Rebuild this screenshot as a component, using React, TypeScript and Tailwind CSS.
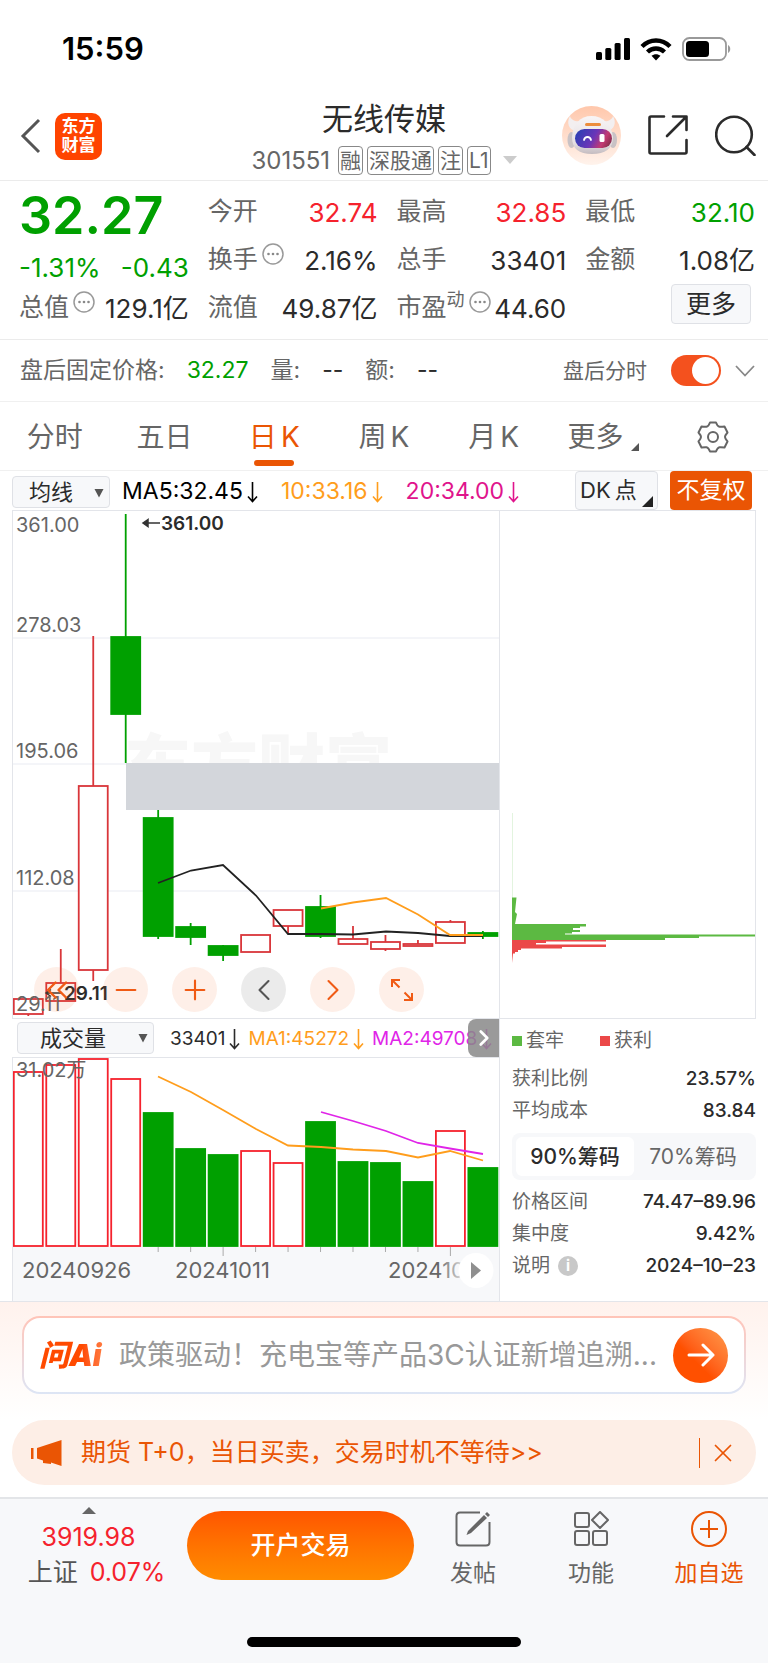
import React, { useState } from "react";
import { ChevronLeft, ChevronRight, ChevronsLeft, Minus, Plus, X } from "lucide-react";

const UP = "#d9363a";
const DOWN = "#00a000";

// open bodies are drawn as outlines, falling ones are filled
const candles = [
  { up: true, top: 999, bottom: 1014, high: 999, low: 1016 },
  { up: true, top: 983, bottom: 1001, high: 949, low: 1001 },
  { up: true, top: 786, bottom: 970, high: 636, low: 981 },
  { up: false, top: 637, bottom: 714, high: 514, low: 763 },
  { up: false, top: 818, bottom: 936, high: 810, low: 939 },
  { up: false, top: 927, bottom: 937, high: 923, low: 945 },
  { up: false, top: 946, bottom: 955, high: 945, low: 961 },
  { up: true, top: 935, bottom: 952, high: 935, low: 952 },
  { up: true, top: 910, bottom: 926, high: 910, low: 933 },
  { up: false, top: 907, bottom: 936, high: 895, low: 938 },
  { up: true, top: 939, bottom: 944, high: 926, low: 944 },
  { up: true, top: 942, bottom: 949, high: 935, low: 951 },
  { up: true, top: 944, bottom: 946, high: 940, low: 946 },
  { up: true, top: 922, bottom: 943, high: 920, low: 943 },
  { up: false, top: 933, bottom: 936, high: 931, low: 939 },
];

const volumes = [
  { up: true, top: 1072 },
  { up: true, top: 1065 },
  { up: true, top: 1059 },
  { up: true, top: 1079 },
  { up: false, top: 1113 },
  { up: false, top: 1149 },
  { up: false, top: 1155 },
  { up: true, top: 1151 },
  { up: true, top: 1163 },
  { up: false, top: 1122 },
  { up: false, top: 1162 },
  { up: false, top: 1163 },
  { up: false, top: 1182 },
  { up: true, top: 1131 },
  { up: false, top: 1168 },
];

const centerX = (i: number) => 28.3 + i * 32.47;

const quotes = [
  { label: "今开", value: "32.74", color: "text-[#f5222d]" },
  { label: "最高", value: "32.85", color: "text-[#f5222d]" },
  { label: "最低", value: "32.10", color: "text-[#00a000]" },
  { label: "换手", value: "2.16%", color: "text-[#2b2b2b]", more: true },
  { label: "总手", value: "33401", color: "text-[#2b2b2b]" },
  { label: "金额", value: "1.08亿", color: "text-[#2b2b2b]" },
  { label: "总值", value: "129.1亿", color: "text-[#2b2b2b]", more: true },
  { label: "流值", value: "49.87亿", color: "text-[#2b2b2b]" },
  { label: "市盈", sup: "动", value: "44.60", color: "text-[#2b2b2b]", more: true },
];

const tabs = ["分时", "五日", "日K", "周K", "月K"];

const MoreDots = () => (
  <svg className="mb-3 ml-1 h-[22px] w-[22px] shrink-0" viewBox="0 0 22 22" fill="none">
    <circle cx="11" cy="11" r="10" stroke="#999" strokeWidth="1.5" />
    <circle cx="6.5" cy="11" r="1.3" fill="#888" />
    <circle cx="11" cy="11" r="1.3" fill="#888" />
    <circle cx="15.5" cy="11" r="1.3" fill="#888" />
  </svg>
);

const DownArrow = () => (
  <svg className="ml-1 h-6 w-[11px] shrink-0" viewBox="0 0 11 24" fill="none" stroke="currentColor" strokeWidth="1.6">
    <path d="M5.5 2V21M1 16.5L5.5 21.5L10 16.5" />
  </svg>
);

const Caret = () => (
  <svg className="pointer-events-none absolute right-1.5 top-1/2 h-2.5 w-2.5 -translate-y-1/2" viewBox="0 0 10 10">
    <path d="M0.5 1H9.5L5 9.5Z" fill="#555" />
  </svg>
);

const Robot = () => (
  <svg className="h-[59px] w-[59px]" viewBox="0 0 59 59">
    <defs>
      <linearGradient id="robotBg" x1="0" y1="0" x2="0" y2="1">
        <stop offset="0" stopColor="#ffc7ab" />
        <stop offset="1" stopColor="#fff3ec" />
      </linearGradient>
      <linearGradient id="robotBody" x1="0" y1="0" x2="0" y2="1">
        <stop offset="0" stopColor="#f8f5f6" />
        <stop offset="0.7" stopColor="#e6e0e3" />
        <stop offset="1" stopColor="#c4bcc0" />
      </linearGradient>
      <linearGradient id="robotFace" x1="0" y1="0.3" x2="1" y2="0.6">
        <stop offset="0" stopColor="#2c3fb4" />
        <stop offset="0.5" stopColor="#6a35b8" />
        <stop offset="0.8" stopColor="#c43a72" />
        <stop offset="1" stopColor="#8a2f50" />
      </linearGradient>
    </defs>
    <circle cx="29.5" cy="29.5" r="29.5" fill="url(#robotBg)" />
    <path d="M8 10C4 17 7 24 14 25L20 15C13 16 9 14 8 10Z" fill="#f3eff0" />
    <path d="M51 10C55 17 52 24 45 25L39 15C46 16 50 14 51 10Z" fill="#f3eff0" />
    <ellipse cx="9.5" cy="34" rx="4" ry="8" fill="#c9c2c5" />
    <ellipse cx="51" cy="34" rx="4" ry="8" fill="#c9c2c5" />
    <path d="M29.5 10C18 10 11 18 10 31C10 43 17 48 30 48C43 48 51 43 51 31C49 18 41 10 29.5 10Z" fill="url(#robotBody)" />
    <rect x="23" y="17" width="16" height="3" rx="1.5" fill="#ec8d3c" />
    <rect x="13" y="23" width="37" height="19" rx="9.5" fill="url(#robotFace)" />
    <path d="M22 34C23 30 28 30 29 34" stroke="#fff" strokeWidth="1.8" fill="none" strokeLinecap="round" />
    <rect x="37.5" y="28" width="5" height="8" rx="1.5" fill="#fff" />
  </svg>
);

const KChart = () => (
  <svg className="block h-auto w-full" viewBox="13 511 486 507">
    {[638, 764, 891].map((y) => (
      <path key={y} d={`M12 ${y}H500`} stroke="#e9ebf2" />
    ))}
    <text x="124" y="790" fontSize="67" fontWeight="900" fill="#f7f7f7">
      东方财富
    </text>
    <rect x="126" y="763" width="374" height="47" fill="#d3d6db" />
    <g fontSize="20" fill="#666">
      <text x="16" y="532">361.00</text>
      <text x="16" y="632">278.03</text>
      <text x="16" y="758">195.06</text>
      <text x="16" y="885">112.08</text>
    </g>
    {candles.map((c, i) => {
      const color = c.up ? UP : DOWN;
      return (
        <g key={i} stroke={color}>
          <path d={`M${centerX(i)} ${c.high}V${c.top}M${centerX(i)} ${c.bottom}V${c.low}`} strokeWidth="1.8" />
          <rect
            x={centerX(i) - 14.5}
            y={c.top}
            width="29"
            height={c.bottom - c.top}
            fill={c.up ? "#fff" : color}
            fillOpacity={i < 2 ? 0 : 1}
            strokeWidth="1.8"
          />
        </g>
      );
    })}
    <polyline
      points="158,883 191,870.5 223,865 256,895.5 288,934 321,934 353,934.5 386,931.5 418,933 450,936 483,936"
      fill="none"
      stroke="#222"
      strokeWidth="1.8"
    />
    <polyline points="321,908.5 353,902.5 386,898 418,914.5 450,935 483,935" fill="none" stroke="#ff9d1c" strokeWidth="1.8" />
    <path d="M143 523H160M148 519.5L143 523L148 526.5Z" stroke="#333" fill="#333" strokeWidth="1.5" />
    <g fontSize="19" fontWeight="600" fill="#2b2b2b">
      <text x="161" y="530">361.00</text>
      <text x="64" y="1000">29.11</text>
    </g>
    <path d="M46 993H62M51 989.5L46 993L51 996.5" stroke="#333" strokeWidth="1.5" fill="none" />
    <text x="16" y="1011" fontSize="20" fill="#666">
      29.11
    </text>
  </svg>
);

const VolumeChart = () => (
  <svg className="block h-auto w-full" viewBox="13 1058 486 243">
    <rect x="12" y="1247" width="488" height="54" fill="#f7f8fa" />
    {volumes.map((v, i) => (
      <rect
        key={i}
        x={centerX(i) - 14.5}
        y={v.top}
        width="29"
        height={1246 - v.top}
        fill={v.up ? "#fff" : DOWN}
        stroke={v.up ? "#f5222d" : DOWN}
        strokeWidth="1.8"
      />
    ))}
    {[4, 5, 6, 7, 8, 9, 10, 11, 12, 13].map((i) => (
      <path key={i} d={`M${centerX(i)} 1247V${i === 6 || i === 13 ? 1256 : 1252}`} stroke="#aaa" />
    ))}
    <polyline
      points="158,1076.5 191,1092 223,1110 256,1129 288,1145.5 321,1147 353,1149.5 386,1151 418,1157.5 450,1151 483,1160.5"
      fill="none"
      stroke="#ff9d1c"
      strokeWidth="1.8"
    />
    <polyline points="321,1112 353,1121 386,1131 418,1143 450,1148.5 483,1154" fill="none" stroke="#e025e8" strokeWidth="1.8" />
    <text x="16" y="1077" fontSize="20" fill="#666">
      31.02万
    </text>
    <g fontSize="22" fill="#666">
      <text x="22" y="1278">20240926</text>
      <text x="175" y="1278">20241011</text>
      <text x="388" y="1278">20241023</text>
    </g>
    <defs>
      <linearGradient id="dateFade">
        <stop offset="0" stopColor="#f7f8fa" stopOpacity="0" />
        <stop offset="0.5" stopColor="#f7f8fa" />
      </linearGradient>
    </defs>
    <rect x="438" y="1257" width="62" height="42" fill="url(#dateFade)" />
    <circle cx="476" cy="1270.5" r="17.5" fill="#fff" />
    <path d="M471 1262L481 1270.5L471 1279Z" fill="#8f8f8f" />
  </svg>
);

const ChipChart = () => (
  <svg className="block h-auto w-full" viewBox="500 511 255 507">
    <path d="M512.5 813V898" stroke="#e3f4df" />
    <path
      d="M512 897.5H516.5L515 912L517 914L515 924H586V926.5H580V928H573V930H580V932H572V933.5H565V934.5H755V936.5H699V938H665V940H512Z"
      fill="#5cb942"
    />
    <path
      d="M512 940H606V941.5H546V943H536V944.5H606V947H562V948.5H521V950H518V952H515V953.5H513L512 963Z"
      fill="#eb4848"
    />
  </svg>
);

const ToolButton = ({ label, gray, children }: { label: string; gray?: boolean; children: React.ReactNode }) => (
  <button
    aria-label={label}
    className={
      gray
        ? "flex h-[45px] w-[45px] items-center justify-center rounded-full bg-black/8 text-[#555]"
        : "flex h-[45px] w-[45px] items-center justify-center rounded-full bg-[#f26322]/10 text-[#f05a14]"
    }
  >
    {children}
  </button>
);

const InfoRow = ({ label, value, info }: { label: string; value: string; info?: boolean }) => (
  <div className="flex h-8 items-center justify-between text-[19px]">
    <span className="flex items-center gap-2 text-[#666]">
      {label}
      {info && (
        <span className="flex h-5 w-5 items-center justify-center rounded-full bg-[#c8c8c8] text-[15px] font-bold text-white">i</span>
      )}
    </span>
    <span className="font-medium text-[#2b2b2b]">{value}</span>
  </div>
);

const App = () => {
  const [tab, setTab] = useState("日K");
  const [range, setRange] = useState("90%筹码");
  const [afterHours, setAfterHours] = useState(true);
  const [showBanner, setShowBanner] = useState(true);

  return (
    <div className="w-full bg-white font-['Inter','Noto_Sans_CJK_SC',sans-serif] text-[#2b2b2b]">
      {/* status bar */}
      <div className="flex h-[98px] items-center justify-between pl-[62px] pr-9">
        <span className="text-[31px] font-semibold text-black">15:59</span>
        <div className="flex items-center gap-2.5">
          <svg className="h-[22px] w-[34px]" viewBox="0 0 34 22">
            <rect x="0" y="14" width="6" height="8" rx="1.5" />
            <rect x="9.3" y="10" width="6" height="12" rx="1.5" />
            <rect x="18.6" y="5" width="6" height="17" rx="1.5" />
            <rect x="28" y="0" width="6" height="22" rx="1.5" />
          </svg>
          <svg className="h-[23px] w-8" viewBox="0 0 32 23" fill="none" stroke="#000" strokeWidth="4.4">
            <path d="M2 8.5C10 0.5 22 0.5 30 8.5" />
            <path d="M7.5 14C12.5 9.3 19.5 9.3 24.5 14" />
            <path d="M16 22.5L11.5 17.8C14 15.6 18 15.6 20.5 17.8Z" fill="#000" stroke="none" />
          </svg>
          <svg className="h-6 w-[50px]" viewBox="0 0 50 24">
            <rect x="1" y="1" width="43" height="22" rx="6.5" fill="none" stroke="#999" strokeWidth="1.8" />
            <rect x="4" y="4" width="23" height="16" rx="3.5" />
            <path d="M46 8C49 9.5 49 14.5 46 16Z" fill="#999" />
          </svg>
        </div>
      </div>

      {/* header */}
      <header className="grid h-[83px] grid-cols-[1fr_auto_1fr] border-b border-[#ebebeb]">
        <div className="flex items-center gap-[14px] pb-1.5 pl-5">
          <button aria-label="返回">
            <svg className="h-9 w-[21px]" viewBox="0 0 21 36" fill="none" stroke="#555" strokeWidth="3">
              <path d="M19 2L3 18L19 34" />
            </svg>
          </button>
          <span className="flex h-[47px] w-[47px] flex-col items-center justify-center rounded-[10px] bg-[#ff4400] text-[17px] leading-[19px] font-bold text-white">
            <span>东方</span>
            <span>财富</span>
          </span>
        </div>
        <div className="flex flex-col items-center">
          <h1 className="h-[42px] text-[31px] leading-[42px]">无线传媒</h1>
          <div className="flex h-10 items-center gap-1 text-[24px] leading-[27px] text-[#666]">
            <span className="mr-1">301551</span>
            {["融", "深股通", "注", "L1"].map((t) => (
              <span key={t} className="rounded-[4px] border border-[#888] px-px text-[21px]">
                {t}
              </span>
            ))}
            <svg className="ml-2 h-2 w-[14px]" viewBox="0 0 14 8">
              <path d="M0 0H14L7 8Z" fill="#ccc" />
            </svg>
          </div>
        </div>
        <div className="flex items-center justify-end gap-[27px] pb-2 pr-3">
          <Robot />
          <button aria-label="分享">
            <svg className="h-10 w-10" viewBox="0 0 40 40" fill="none" stroke="#2b2b2b" strokeWidth="2.6" strokeLinecap="round">
              <path d="M16 1.5H3Q1.5 1.5 1.5 3V37Q1.5 38.5 3 38.5H37Q38.5 38.5 38.5 37V25" />
              <path d="M25 1.5H38.5V15M38 2L19 21" strokeLinejoin="round" />
            </svg>
          </button>
          <button aria-label="搜索">
            <svg className="h-[41px] w-[41px]" viewBox="0 0 41 41" fill="none" stroke="#2b2b2b" strokeWidth="2.6" strokeLinecap="round">
              <circle cx="19" cy="19.5" r="17.8" />
              <path d="M31.5 32L39.5 40" />
            </svg>
          </button>
        </div>
      </header>

      {/* quote */}
      <section className="grid grid-cols-4 grid-rows-[48px_48px_48px] gap-x-[19px] border-b border-[#ebebeb] pt-[7px] pr-[13px] pb-[7px] pl-[19px] text-[25px]">
        <div className="row-span-2 flex flex-col text-[#00a000]">
          <span className="h-[55px] shrink-0 text-[52px] leading-[55px] font-semibold">32.27</span>
          <span className="flex h-12 shrink-0 items-center justify-between text-[26px]">
            <span>-1.31%</span>
            <span>-0.43</span>
          </span>
        </div>
        {quotes.map((q) => (
          <div key={q.label} className="flex items-center justify-between whitespace-nowrap">
            <span className="flex items-center text-[#666]">
              {q.label}
              {q.sup && <span className="mb-4 text-[18px] leading-5">{q.sup}</span>}
              {q.more && <MoreDots />}
            </span>
            <span className={`text-[26px] ${q.color}`}>{q.value}</span>
          </div>
        ))}
        <div className="flex items-start justify-end pr-1">
          <button className="h-10 w-20 rounded-[4px] border border-[#dfe1e6] bg-[#f7f8fa] leading-[36px]">更多</button>
        </div>
      </section>

      {/* after hours */}
      <section className="flex h-[62px] items-center border-b border-[#f0f0f0] pr-[13px] pl-5 text-[23px] text-[#666]">
        <span>盘后固定价格:</span>
        <span className="ml-[22px] text-[#00a000]">32.27</span>
        <span className="ml-[22px]">量:</span>
        <span className="ml-[22px] text-[#2b2b2b]">--</span>
        <span className="ml-[22px]">额:</span>
        <span className="ml-[22px] text-[#2b2b2b]">--</span>
        <label className="ml-auto flex items-center gap-6 text-[21px]">
          盘后分时
          <input
            type="checkbox"
            className="peer sr-only"
            checked={afterHours}
            onChange={(e) => setAfterHours(e.target.checked)}
          />
          <span className="flex h-[31px] w-[50px] items-center rounded-full bg-[#ccc] p-0.5 peer-checked:justify-end peer-checked:bg-[#f4511e]">
            <span className="h-[27px] w-[27px] rounded-full bg-white" />
          </span>
        </label>
        <svg className="ml-[14px] h-3 w-5" viewBox="0 0 20 12" fill="none" stroke="#888" strokeWidth="1.8">
          <path d="M1 1L10 10.5L19 1" />
        </svg>
      </section>

      {/* period tabs */}
      <nav className="grid h-[69px] grid-cols-7 border-b border-[#f0f0f0] pt-0.5 text-[28px]">
        {tabs.map((t) => (
          <button
            key={t}
            onClick={() => setTab(t)}
            className={
              tab === t
                ? "relative flex items-center justify-center gap-1 text-[#ea5504]"
                : "relative flex items-center justify-center gap-1 text-[#666]"
            }
          >
            {t.endsWith("K") ? (
              <>
                <span>{t[0]}</span>
                <span>K</span>
              </>
            ) : (
              t
            )}
            {tab === t && <span className="absolute bottom-1 left-1/2 h-1.5 w-10 -translate-x-1/2 rounded-[3px] bg-[#ea5504]" />}
          </button>
        ))}
        <button className="flex items-center justify-center gap-2 text-[#666]">
          更多
          <svg className="mt-5 h-2 w-2" viewBox="0 0 8 8">
            <path d="M8 0V8H0Z" fill="#555" />
          </svg>
        </button>
        <button aria-label="设置" className="flex items-center justify-center">
          <svg className="h-8 w-8" viewBox="0 0 32 32" fill="none" stroke="#666" strokeWidth="2" strokeLinejoin="round">
            <path d="M13 1.5H19Q20.5 5.5 22.5 5.8Q24 6 27.5 5.5L30.5 11.5Q28 14.5 28 16Q28 17.5 30.5 20.5L27.5 26.5Q24 26 22.5 26.2Q20.5 26.5 19 30.5H13Q11.5 26.5 9.5 26.2Q8 26 4.5 26.5L1.5 20.5Q4 17.5 4 16Q4 14.5 1.5 11.5L4.5 5.5Q8 6 9.5 5.8Q11.5 5.5 13 1.5Z" />
            <circle cx="16" cy="16" r="5" />
          </svg>
        </button>
      </nav>

      {/* moving averages */}
      <div className="flex h-[39px] items-center pr-4 pl-3 text-[23px] whitespace-nowrap">
        <div className="relative mt-1 text-[22px]">
          <select aria-label="指标" className="h-8 w-[98px] appearance-none rounded-[4px] border border-[#dfe1e6] bg-[#f7f8fa] pl-4 leading-[30px]">
            <option>均线</option>
          </select>
          <Caret />
        </div>
        <div className="mt-0.5 ml-3 flex gap-[23px]">
          <span className="flex items-center text-black">
            MA5:32.45
            <DownArrow />
          </span>
          <span className="flex items-center text-[#ff9d1c]">
            10:33.16
            <DownArrow />
          </span>
          <span className="flex items-center text-[#e0148c]">
            20:34.00
            <DownArrow />
          </span>
        </div>
        <button className="relative ml-auto flex h-[39px] w-[83px] items-center gap-1 rounded-[4px] border border-[#dfe1e6] bg-[#f7f8fa] pl-1 text-[22px]">
          <span>DK</span>
          <span>点</span>
          <svg className="absolute right-1 bottom-0.5 h-[11px] w-[11px]" viewBox="0 0 11 11">
            <path d="M11 0V11H0Z" fill="#222" />
          </svg>
        </button>
        <button className="ml-3 h-[39px] w-[82px] rounded-[4px] bg-[#ea5504] text-white">不复权</button>
      </div>

      {/* charts */}
      <main className="grid grid-cols-[488fr_256fr] px-3">
        <div className="min-w-0 border-r border-[#e3e5ea]">
          <div className="relative border-t border-b border-l border-[#e3e5ea]">
            <KChart />
            <div className="absolute bottom-1.5 left-[21px] flex gap-6">
              <ToolButton label="最早">
                <ChevronsLeft size={36} strokeWidth={1.6} />
              </ToolButton>
              <ToolButton label="缩小">
                <Minus size={32} strokeWidth={1.6} />
              </ToolButton>
              <ToolButton label="放大">
                <Plus size={32} strokeWidth={1.6} />
              </ToolButton>
              <ToolButton label="左移" gray>
                <ChevronLeft size={36} strokeWidth={1.4} />
              </ToolButton>
              <ToolButton label="右移">
                <ChevronRight size={36} strokeWidth={1.4} />
              </ToolButton>
              <ToolButton label="全屏">
                <svg className="h-6 w-6" viewBox="0 0 24 24" fill="none" stroke="currentColor" strokeWidth="2">
                  <path d="M2 9V2H10M2 2L9.5 9.5M22 15V22H14M22 22L14.5 14.5" />
                </svg>
              </ToolButton>
            </div>
          </div>
          <div className="relative flex h-[38px] items-center overflow-hidden text-[19px] whitespace-nowrap">
            <div className="relative ml-[5px] text-[22px]">
              <select aria-label="副图" className="h-8 w-[137px] appearance-none rounded-[4px] border border-[#dfe1e6] bg-[#f7f8fa] pl-[22px] leading-[30px]">
                <option>成交量</option>
              </select>
              <Caret />
            </div>
            <div className="mt-0.5 ml-4 flex gap-2">
              <span className="flex items-center">
                33401
                <DownArrow />
              </span>
              <span className="flex items-center text-[#ff9d1c]">
                MA1:45272
                <DownArrow />
              </span>
              <span className="flex items-center text-[#e025e8]">
                MA2:49708
                <DownArrow />
              </span>
            </div>
            <button aria-label="展开" className="absolute inset-y-0 right-0 flex w-[31px] items-center justify-center rounded-l-lg bg-[#888]/85 text-white">
              <ChevronRight size={26} strokeWidth={2.5} />
            </button>
          </div>
          <div className="border-t border-l border-[#e3e5ea]">
            <VolumeChart />
          </div>
        </div>

        <div className="min-w-0">
          <div className="border-t border-r border-b border-[#e3e5ea]">
            <ChipChart />
          </div>
          <div className="pl-3">
            <div className="flex h-11 items-center text-[19px] text-[#666]">
              <span className="flex w-[88px] items-center gap-1">
                <span className="h-2.5 w-2.5 bg-[#5cb942]" />
                套牢
              </span>
              <span className="flex items-center gap-1">
                <span className="h-2.5 w-2.5 bg-[#eb4848]" />
                获利
              </span>
            </div>
            <InfoRow label="获利比例" value="23.57%" />
            <InfoRow label="平均成本" value="83.84" />
            <div className="my-1.5 flex h-[47px] rounded-lg bg-[#f7f8fa] p-1 text-[21px]">
              {["90%筹码", "70%筹码"].map((r) => (
                <button
                  key={r}
                  onClick={() => setRange(r)}
                  className={range === r ? "flex-1 rounded-md bg-white font-medium" : "flex-1 text-[#666]"}
                >
                  {r}
                </button>
              ))}
            </div>
            <InfoRow label="价格区间" value="74.47–89.96" />
            <InfoRow label="集中度" value="9.42%" />
            <InfoRow label="说明" value="2024–10–23" info />
          </div>
        </div>
      </main>

      {/* ask ai */}
      <section className="border-t border-[#e3e5ea] bg-linear-to-b from-[#fff2ed] to-white px-[22px] pt-[14px] pb-[26px]">
        <div className="rounded-[18px] bg-linear-to-b from-[#ffc4b8] to-[#dde5f5] p-0.5">
          <div className="flex h-[74px] items-center rounded-2xl bg-white pr-4 pl-[15px]">
            <label
              htmlFor="ask"
              className="w-[72px] shrink-0 bg-linear-to-r from-[#ff4a00] from-60% to-[#ff8a4d] bg-clip-text text-[30px] font-black text-transparent italic"
            >
              问Ai
            </label>
            <input
              id="ask"
              className="ml-2 min-w-0 flex-1 text-[28px] outline-none placeholder:text-[#999]"
              placeholder="政策驱动！充电宝等产品3C认证新增追溯..."
            />
            <button aria-label="发送" className="ml-4 flex h-[55px] w-[55px] shrink-0 items-center justify-center rounded-full bg-linear-to-tr from-[#ff5000] from-40% to-[#ff9a4a]">
              <svg className="h-7 w-7" viewBox="0 0 28 28" fill="none" stroke="#fff" strokeWidth="3" strokeLinecap="round" strokeLinejoin="round">
                <path d="M2 14H26M16 4L26 14L16 24" />
              </svg>
            </button>
          </div>
        </div>
      </section>

      {showBanner && (
        <div className="mx-3 mb-3 flex h-[65px] items-center rounded-full bg-[#fdeee6] pr-[18px] pl-[19px] text-[#ea5504]">
          <svg className="h-[26px] w-[31px] shrink-0" viewBox="0 0 31 26" fill="#ea5504">
            <rect x="0" y="8" width="2.5" height="11" />
            <path d="M6 8L30.5 0V26L20 22.5V24L12 23V20.5L6 18.5Z" />
          </svg>
          <a href="#" className="ml-[19px] flex-1 text-[25px]">
            期货 T+0，当日买卖，交易时机不等待&gt;&gt;
          </a>
          <span className="h-[30px] w-px bg-[#ea5504]" />
          <button aria-label="关闭" className="ml-2" onClick={() => setShowBanner(false)}>
            <X size={30} strokeWidth={1.4} />
          </button>
        </div>
      )}

      {/* bottom bar */}
      <footer className="border-t-2 border-[#e3e5e8] bg-[#f7f8fa]">
        <div className="grid h-[132px] grid-cols-[187fr_227fr_118fr_118fr_118fr] text-[23px]">
          <div className="flex flex-col items-center pt-2 pr-2.5 text-[25px] leading-[35px] text-[#f5222d]">
            <svg className="h-[7px] w-[14px]" viewBox="0 0 14 7">
              <path d="M7 0L14 7H0Z" fill="#666" />
            </svg>
            <span className="mt-1.5">3919.98</span>
            <span className="flex gap-3 pl-4">
              <span className="text-[#555]">上证</span>
              <span>0.07%</span>
            </span>
          </div>
          <button className="mt-3 h-[69px] rounded-full bg-linear-to-b from-[#ff5500] to-[#ff8c00] text-[25px] font-medium text-white">
            开户交易
          </button>
          <button className="mt-3 flex h-[77px] flex-col items-center justify-between text-[#666]">
            <svg className="h-9 w-9" viewBox="0 0 36 36" fill="none" stroke="currentColor" strokeWidth="2">
              <path d="M25 1.5H5Q1.5 1.5 1.5 5V31Q1.5 34.5 5 34.5H31Q34.5 34.5 34.5 31V11" />
              <path d="M13 20L29 4L32 7L16 22L11.5 24Z" fill="currentColor" stroke="none" />
              <path d="M30 3L32 1L35 4L33 6Z" fill="currentColor" stroke="none" />
            </svg>
            <span className="leading-[30px]">发帖</span>
          </button>
          <button className="mt-3 flex h-[77px] flex-col items-center justify-between text-[#666]">
            <svg className="h-9 w-9" viewBox="0 0 36 36" fill="none" stroke="currentColor" strokeWidth="2" strokeLinejoin="round">
              <rect x="2" y="2" width="14" height="14" rx="2" />
              <rect x="2" y="20" width="14" height="14" rx="2" />
              <rect x="20" y="20" width="14" height="14" rx="2" />
              <path d="M27 1L35 9L27 17L19 9Z" />
            </svg>
            <span className="leading-[30px]">功能</span>
          </button>
          <button className="mt-3 flex h-[77px] flex-col items-center justify-between text-[#ea5504]">
            <svg className="h-9 w-9" viewBox="0 0 36 36" fill="none" stroke="currentColor" strokeWidth="2">
              <circle cx="18" cy="18" r="17" />
              <path d="M18 9V27M9 18H27" />
            </svg>
            <span className="leading-[30px]">加自选</span>
          </button>
        </div>
        <div className="flex justify-center pt-1.5 pb-4">
          <span className="h-2.5 w-[274px] rounded-full bg-black" />
        </div>
      </footer>
    </div>
  );
};

export default App;
